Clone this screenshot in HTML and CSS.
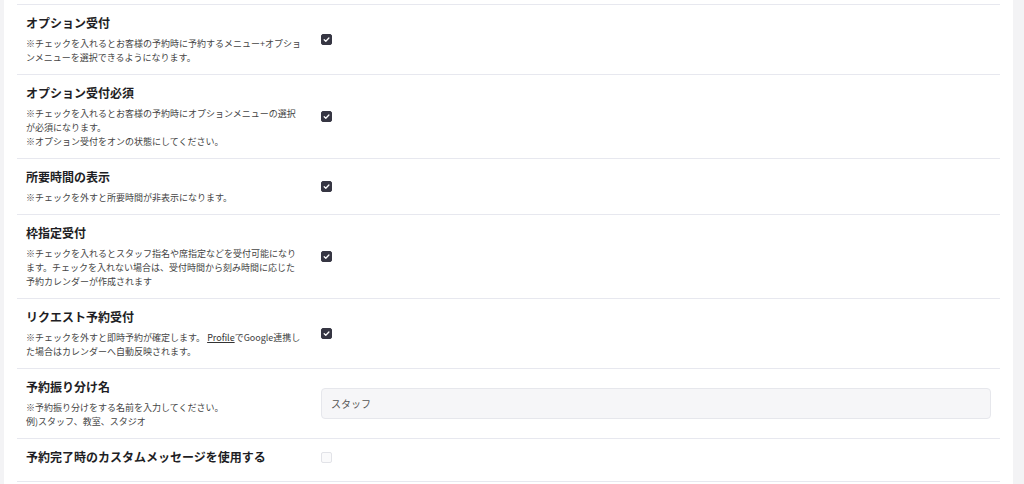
FILE: index.html
```html
<!DOCTYPE html>
<html lang="ja">
<head>
<meta charset="utf-8">
<link rel="stylesheet" href="styles.css">
</head>
<body>
<div class="card">
  <div class="row">
    <div class="label">
      <div class="title">オプション受付</div>
      <div class="desc">※チェックを入れるとお客様の予約時に予約するメニュー+オプションメニューを選択できるようになります。</div>
    </div>
    <div class="control"><span class="check checked"><svg viewBox="0 0 11 11" width="11" height="11"><path d="M3.2 5.7 L4.8 7.2 L7.9 4" fill="none" stroke="#fff" stroke-width="1.3" stroke-linecap="round" stroke-linejoin="round"/></svg></span></div>
  </div>
  <div class="row">
    <div class="label">
      <div class="title">オプション受付必須</div>
      <div class="desc">※チェックを入れるとお客様の予約時にオプションメニューの選択が必須になります。<br>※オプション受付をオンの状態にしてください。</div>
    </div>
    <div class="control"><span class="check checked"><svg viewBox="0 0 11 11" width="11" height="11"><path d="M3.2 5.7 L4.8 7.2 L7.9 4" fill="none" stroke="#fff" stroke-width="1.3" stroke-linecap="round" stroke-linejoin="round"/></svg></span></div>
  </div>
  <div class="row">
    <div class="label">
      <div class="title">所要時間の表示</div>
      <div class="desc">※チェックを外すと所要時間が非表示になります。</div>
    </div>
    <div class="control"><span class="check checked"><svg viewBox="0 0 11 11" width="11" height="11"><path d="M3.2 5.7 L4.8 7.2 L7.9 4" fill="none" stroke="#fff" stroke-width="1.3" stroke-linecap="round" stroke-linejoin="round"/></svg></span></div>
  </div>
  <div class="row">
    <div class="label">
      <div class="title">枠指定受付</div>
      <div class="desc">※チェックを入れるとスタッフ指名や席指定などを受付可能になります。チェックを入れない場合は、受付時間から刻み時間に応じた予約カレンダーが作成されます</div>
    </div>
    <div class="control"><span class="check checked"><svg viewBox="0 0 11 11" width="11" height="11"><path d="M3.2 5.7 L4.8 7.2 L7.9 4" fill="none" stroke="#fff" stroke-width="1.3" stroke-linecap="round" stroke-linejoin="round"/></svg></span></div>
  </div>
  <div class="row">
    <div class="label">
      <div class="title">リクエスト予約受付</div>
      <div class="desc">※チェックを外すと即時予約が確定します。 <a class="link">Profile</a>でGoogle連携した場合はカレンダーへ自動反映されます。</div>
    </div>
    <div class="control"><span class="check checked"><svg viewBox="0 0 11 11" width="11" height="11"><path d="M3.2 5.7 L4.8 7.2 L7.9 4" fill="none" stroke="#fff" stroke-width="1.3" stroke-linecap="round" stroke-linejoin="round"/></svg></span></div>
  </div>
  <div class="row">
    <div class="label">
      <div class="title">予約振り分け名</div>
      <div class="desc">※予約振り分けをする名前を入力してください。<br>例)スタッフ、教室、スタジオ</div>
    </div>
    <div class="control"><div class="input">スタッフ</div></div>
  </div>
  <div class="row row-single">
    <div class="label">
      <div class="title">予約完了時のカスタムメッセージを使用する</div>
    </div>
    <div class="control"><span class="check"></span></div>
  </div>
</div>
</body>
</html>
```

FILE: styles.css
```css
html, body {
  margin: 0;
  padding: 0;
}
body {
  background: #f3f3f5;
  height: 484px;
  overflow: hidden;
  font-family: "Noto Sans CJK JP", "Noto Sans", sans-serif;
  color: #222;
}
.card {
  margin-left: 4px;
  width: 1009px;
  background: #fff;
  padding-top: 4px;
  min-height: 480px;
}
.row {
  display: flex;
  align-items: center;
  margin: 0 13px;
  padding: 9px 9px 9px;
  border-top: 1px solid #e7e8ef;
}
.row-single {
  padding-bottom: 15px;
  border-bottom: 1px solid #e7e8ef;
}
.label {
  flex: none;
  width: 295px;
}
.title {
  font-size: 12px;
  font-weight: 700;
  line-height: 18px;
  height: 18px;
  color: #1e1e24;
}
.desc {
  margin-top: 5px;
  width: 277px;
  font-size: 9px;
  line-height: 14px;
  color: #444;
}
.link {
  color: #333;
  text-decoration: underline;
  line-height: 14px;
}
.control {
  flex: 1;
  display: flex;
  align-items: center;
}
.check {
  display: block;
  width: 11px;
  height: 11px;
  box-sizing: border-box;
  border-radius: 2px;
  border: 1px solid #e2e3e8;
  background: #fafafb;
}
.check.checked {
  background: #363643;
  border-color: #363643;
}
.check svg {
  display: block;
  margin: -1px;
}
.input {
  box-sizing: border-box;
  width: 670px;
  height: 31px;
  padding: 0 9px;
  display: flex;
  align-items: center;
  border: 1px solid #e6e7ec;
  border-radius: 4px;
  background: #f6f6f8;
  font-size: 10px;
  color: #555;
}
```
